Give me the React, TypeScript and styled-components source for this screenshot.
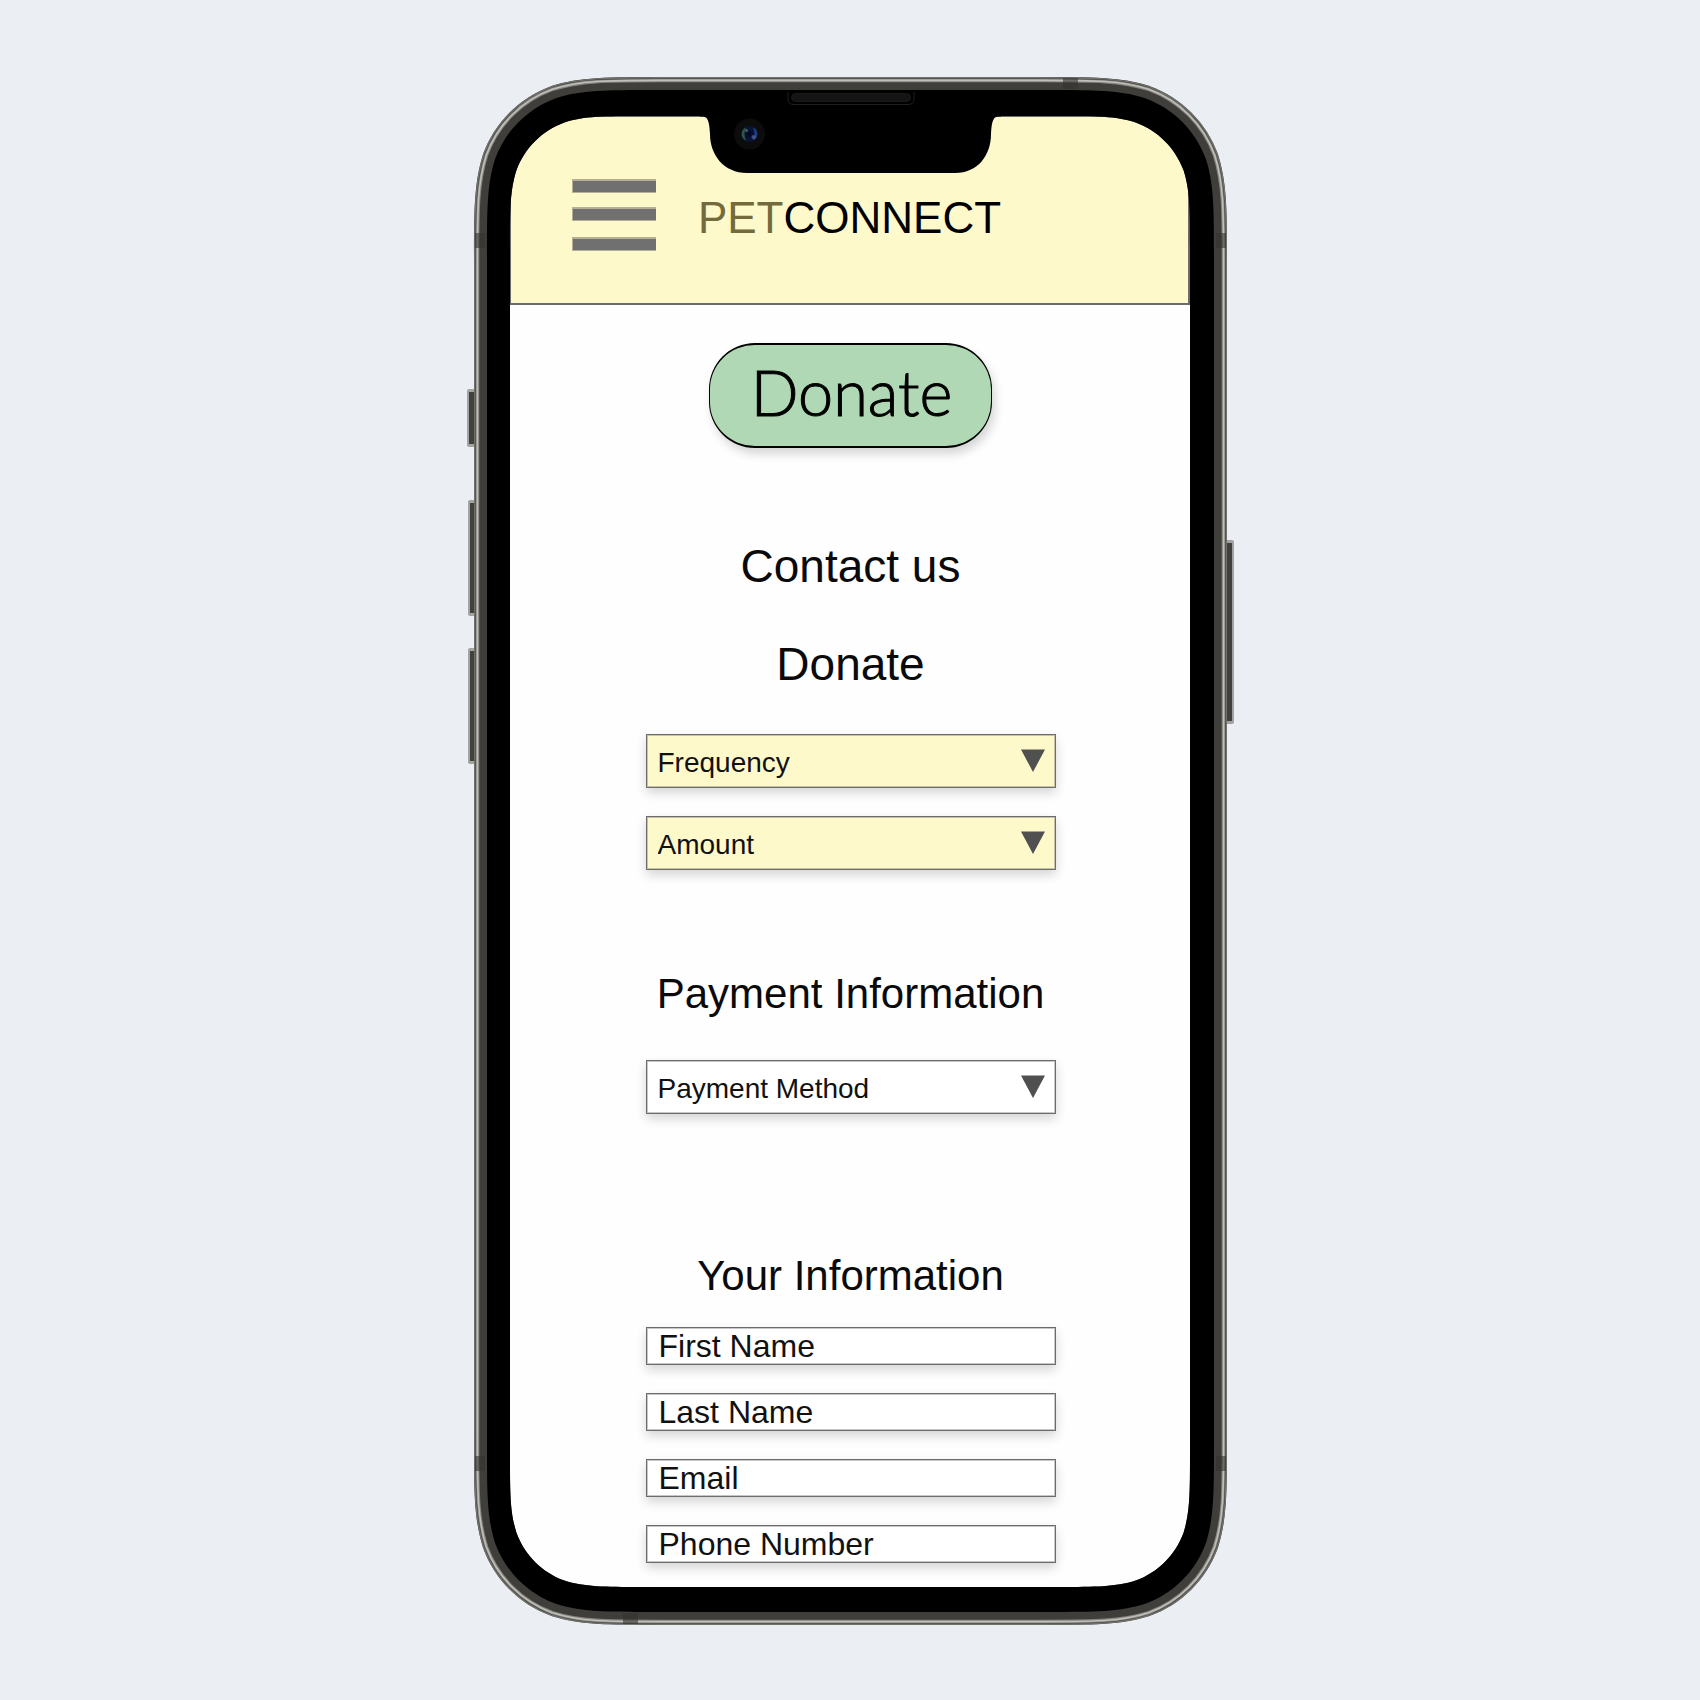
import React from "react";
import styled, { createGlobalStyle } from "styled-components";

const GlobalStyle = createGlobalStyle`
  *, *::before, *::after { box-sizing: border-box; }
  body {
    margin: 0;
    background: #ebeff4;
    color: #0a0a0a;
    font-family: "Liberation Sans", Arial, Helvetica, sans-serif;
  }
`;

const cream = "#fef9cb";
const line = "#6c6c6c";
const fieldShadow = "inset 0 0 0 1px rgba(114, 114, 114, 0.4), 0 5px 10px rgba(0, 0, 0, 0.16)";

const Page = styled.div`
  min-height: 100vh;
  display: flex;
  justify-content: center;
  align-items: flex-start;
  padding: 77px 16px 75px;
`;

const Phone = styled.div`
  position: relative;
  width: 754px;
  padding: 39px 37px 38px;
`;

const FrameArt = styled.svg`
  position: absolute;
  top: 0;
  left: -7px;
  width: 770px;
  height: 1548px;
  pointer-events: none;
`;

const Screen = styled.div`
  background: #fefefe;
  border-radius: 60px;
  overflow: hidden;
`;

const Header = styled.header`
  display: grid;
  grid-template-columns: 1fr auto 1fr;
  align-items: end;
  padding: 62px 0 52px;
  background: ${cream};
  border: solid ${line};
  border-width: 1px 2px 2px 1px;
`;

const MenuButton = styled.button`
  justify-self: start;
  margin-left: 61px;
  padding: 0;
  border: 0;
  background: none;
  cursor: pointer;

  svg { display: block; }
`;

const Brand = styled.h1`
  margin: 0;
  font-size: 44px;
  line-height: 66px;
  font-weight: 400;
  color: #000;
`;

const BrandAccent = styled.span`
  color: #736b3b;
`;

const Main = styled.main`
  display: flex;
  flex-direction: column;
  align-items: center;
  padding: 38px 39px 24px 40px;
`;

const DonateButton = styled.button`
  width: 283px;
  height: 105px;
  padding: 0 0 8px 2px;
  border: solid #000;
  border-width: 2px 1px;
  border-radius: 46px;
  background: #b1d8b5;
  box-shadow: 3px 6px 10px rgba(0, 0, 0, 0.16);
  color: #000;
  font: 300 63px/72px Lato, "Liberation Sans", sans-serif;
  -webkit-text-stroke: 1px #000;
  cursor: pointer;
`;

const Section = styled.section<{ $before: number; $gap: number }>`
  display: flex;
  flex-direction: column;
  align-items: center;
  width: 100%;
  margin-top: ${(p) => p.$before}px;
  gap: ${(p) => p.$gap}px;
`;

const Heading = styled.h2<{ $large?: boolean }>`
  margin: 0;
  font-size: ${(p) => (p.$large ? 46 : 42)}px;
  line-height: 52px;
  font-weight: 400;
`;

const Fields = styled.div`
  display: flex;
  flex-direction: column;
  gap: 28px;
  width: 100%;
  max-width: 410px;
`;

const SelectBox = styled.div`
  display: grid;
  align-items: center;

  > * { grid-area: 1 / 1; }
  > svg { justify-self: end; margin-right: 11px; margin-bottom: 1px; pointer-events: none; }
`;

const Select = styled.select<{ $tinted?: boolean }>`
  appearance: none;
  width: 100%;
  height: 54px;
  padding: 3px 44px 0 11px;
  border: 1px solid ${line};
  border-radius: 0;
  background: ${(p) => (p.$tinted ? cream : "#fff")};
  box-shadow: ${fieldShadow};
  color: #111;
  font: 400 28px/36px "Liberation Sans", Arial, sans-serif;
`;

const TextInput = styled.input`
  width: 100%;
  height: 38px;
  padding: 0 12px;
  border: 1px solid ${line};
  border-radius: 0;
  background: #fff;
  box-shadow: ${fieldShadow};
  color: #111;
  font: 400 32px/36px "Liberation Sans", Arial, sans-serif;

  &::placeholder { color: #111; opacity: 1; }
`;

/* Rounded rectangle whose corners ease into the straight sides. */
function softRect(x: number, y: number, w: number, h: number, r: number) {
  const corner = (cx: number, cy: number, sx: number, sy: number, flip: boolean) => {
    const pts = [
      [1.5287, 0], [1.0885, 0], [0.8684, 0], [0.6315, 0.0749],
      [0.3728, 0.1691], [0.1691, 0.3728], [0.0749, 0.6315],
      [0, 0.8684], [0, 1.0885], [0, 1.5287],
    ].map(([a, b]) => `${(cx + sx * a * r).toFixed(2)} ${(cy + sy * b * r).toFixed(2)}`);
    if (flip) pts.reverse();
    return `${pts[0]} C${pts.slice(1).join(" ")}`;
  };
  return (
    `M${corner(x, y, 1, 1, true)} ` +
    `L${corner(x + w, y, -1, 1, false)} ` +
    `L${corner(x + w, y + h, -1, -1, true)} ` +
    `L${corner(x, y + h, 1, -1, false)} Z`
  );
}

const inset = (d: number) => softRect(8 + d, d, 753 - 2 * d, 1548 - 2 * d, 122 - d);
const screenEdge = softRect(44, 39, 680, 1471, 86);

function PhoneFrame() {
  return (
    <FrameArt viewBox="0 0 770 1548" aria-hidden="true">
      <defs>
        <radialGradient id="lens" cx="0.5" cy="0.5" r="0.5">
          <stop offset="0" stopColor="#04071c" />
          <stop offset="0.6" stopColor="#081436" />
          <stop offset="1" stopColor="#0b1430" />
        </radialGradient>
      </defs>
      {[[1, 312, 58], [2, 423, 116], [2, 571, 116]].map(([x, y, h]) => (
        <g key={y}>
          <rect x={x} y={y} width="12" height={h} rx="2" fill="#a3a39f" />
          <rect x={x + 2} y={y + 3} width="10" height={h - 6} fill="#42423d" />
        </g>
      ))}
      <rect x="756" y="463" width="12" height="184" rx="2" fill="#a3a19f" />
      <rect x="756" y="466" width="10" height="178" fill="#42403c" />

      <path fillRule="evenodd" fill="#3f3e3a" d={`${inset(0)} ${screenEdge}`} />
      <path fill="none" stroke="#70706c" strokeWidth="1.4" d={inset(0.7)} />
      <path fill="none" stroke="#85847f" strokeWidth="3.4" d={inset(3.6)} />
      <path fill="none" stroke="#bfbeb9" strokeWidth="1.6" d={inset(3.4)} />
      <path fillRule="evenodd" fill="#000" d={`${inset(13)} ${screenEdge}`} />

      <g fill="#35332f" fillOpacity="0.6">
        <rect x="597" y="1" width="15" height="11" />
        <rect x="157" y="1536" width="15" height="11" />
        <rect x="9" y="156" width="10" height="15" />
        <rect x="9" y="1379" width="10" height="15" />
        <rect x="750" y="156" width="10" height="15" />
        <rect x="750" y="1379" width="10" height="15" />
      </g>

      <path
        fill="#000"
        d="M234 38 V39.500 H237 C243 39.500 243.500 49 244 57 C244 78 258 96 281 96 H489 C512 96 525 78 525 57 C525.500 49 526 39.500 532 39.500 H535 V38 Z"
      />
      <path d="M322 15 V22 Q322 27.500 328 27.500 H442 Q448 27.500 448 22 V15" fill="none" stroke="#1f1f1f" />
      <rect x="325.500" y="16.500" width="119" height="8" rx="4" fill="#141414" stroke="#1a1a1a" />
      <circle cx="283.500" cy="57" r="15.500" fill="#0c0c0c" />
      <circle cx="283.500" cy="57" r="8" fill="url(#lens)" />
      <path d="M280 50.500 A7 7 0 0 0 280 63.500 Q277 57 280 50.500Z" fill="#2c534c" />
      <path d="M287 50.500 A7 7 0 0 1 287 63.500 Q290 57 287 50.500Z" fill="#1c3f86" />
      <circle cx="287.500" cy="60" r="2" fill="#6f72a8" fillOpacity="0.6" />
      <circle cx="280.500" cy="53.500" r="1.500" fill="#7fa59c" fillOpacity="0.5" />
    </FrameArt>
  );
}

function MenuIcon() {
  return (
    <svg width="84" height="72" viewBox="0 0 84 72" aria-hidden="true">
      {[0, 28, 58].map((y) => (
        <g key={y}>
          <rect y={y} width="84" height="14" fill="#b5b095" />
          <rect x="1" y={y + 2} width="83" height="11" fill="#707070" />
        </g>
      ))}
    </svg>
  );
}

function Dropdown({ label, tinted }: { label: string; tinted?: boolean }) {
  return (
    <SelectBox>
      <Select aria-label={label} $tinted={tinted} defaultValue="">
        <option value="">{label}</option>
      </Select>
      <svg width="24" height="23" viewBox="0 0 24 23" aria-hidden="true">
        <path d="M0 0.500 H24 L12 23 Z" fill="#505050" />
      </svg>
    </SelectBox>
  );
}

const personalFields = [
  { label: "First Name", type: "text", name: "given-name" },
  { label: "Last Name", type: "text", name: "family-name" },
  { label: "Email", type: "email", name: "email" },
  { label: "Phone Number", type: "tel", name: "tel" },
];

export default function App() {
  return (
    <>
      <GlobalStyle />
      <Page>
        <Phone>
          <Screen>
            <Header>
              <MenuButton type="button" aria-label="Menu">
                <MenuIcon />
              </MenuButton>
              <Brand>
                <BrandAccent>PET</BrandAccent>CONNECT
              </Brand>
            </Header>
            <Main>
              <DonateButton type="button">Donate</DonateButton>
              <Section $before={92} $gap={46}>
                <Heading $large>Contact us</Heading>
              </Section>
              <Section $before={46} $gap={44}>
                <Heading $large>Donate</Heading>
                <Fields>
                  <Dropdown label="Frequency" tinted />
                  <Dropdown label="Amount" tinted />
                </Fields>
              </Section>
              <Section $before={98} $gap={40}>
                <Heading>Payment Information</Heading>
                <Fields>
                  <Dropdown label="Payment Method" />
                </Fields>
              </Section>
              <Section $before={136} $gap={25}>
                <Heading>Your Information</Heading>
                <Fields>
                  {personalFields.map((f) => (
                    <TextInput
                      key={f.name}
                      type={f.type}
                      name={f.name}
                      placeholder={f.label}
                      aria-label={f.label}
                    />
                  ))}
                </Fields>
              </Section>
            </Main>
          </Screen>
          <PhoneFrame />
        </Phone>
      </Page>
    </>
  );
}
